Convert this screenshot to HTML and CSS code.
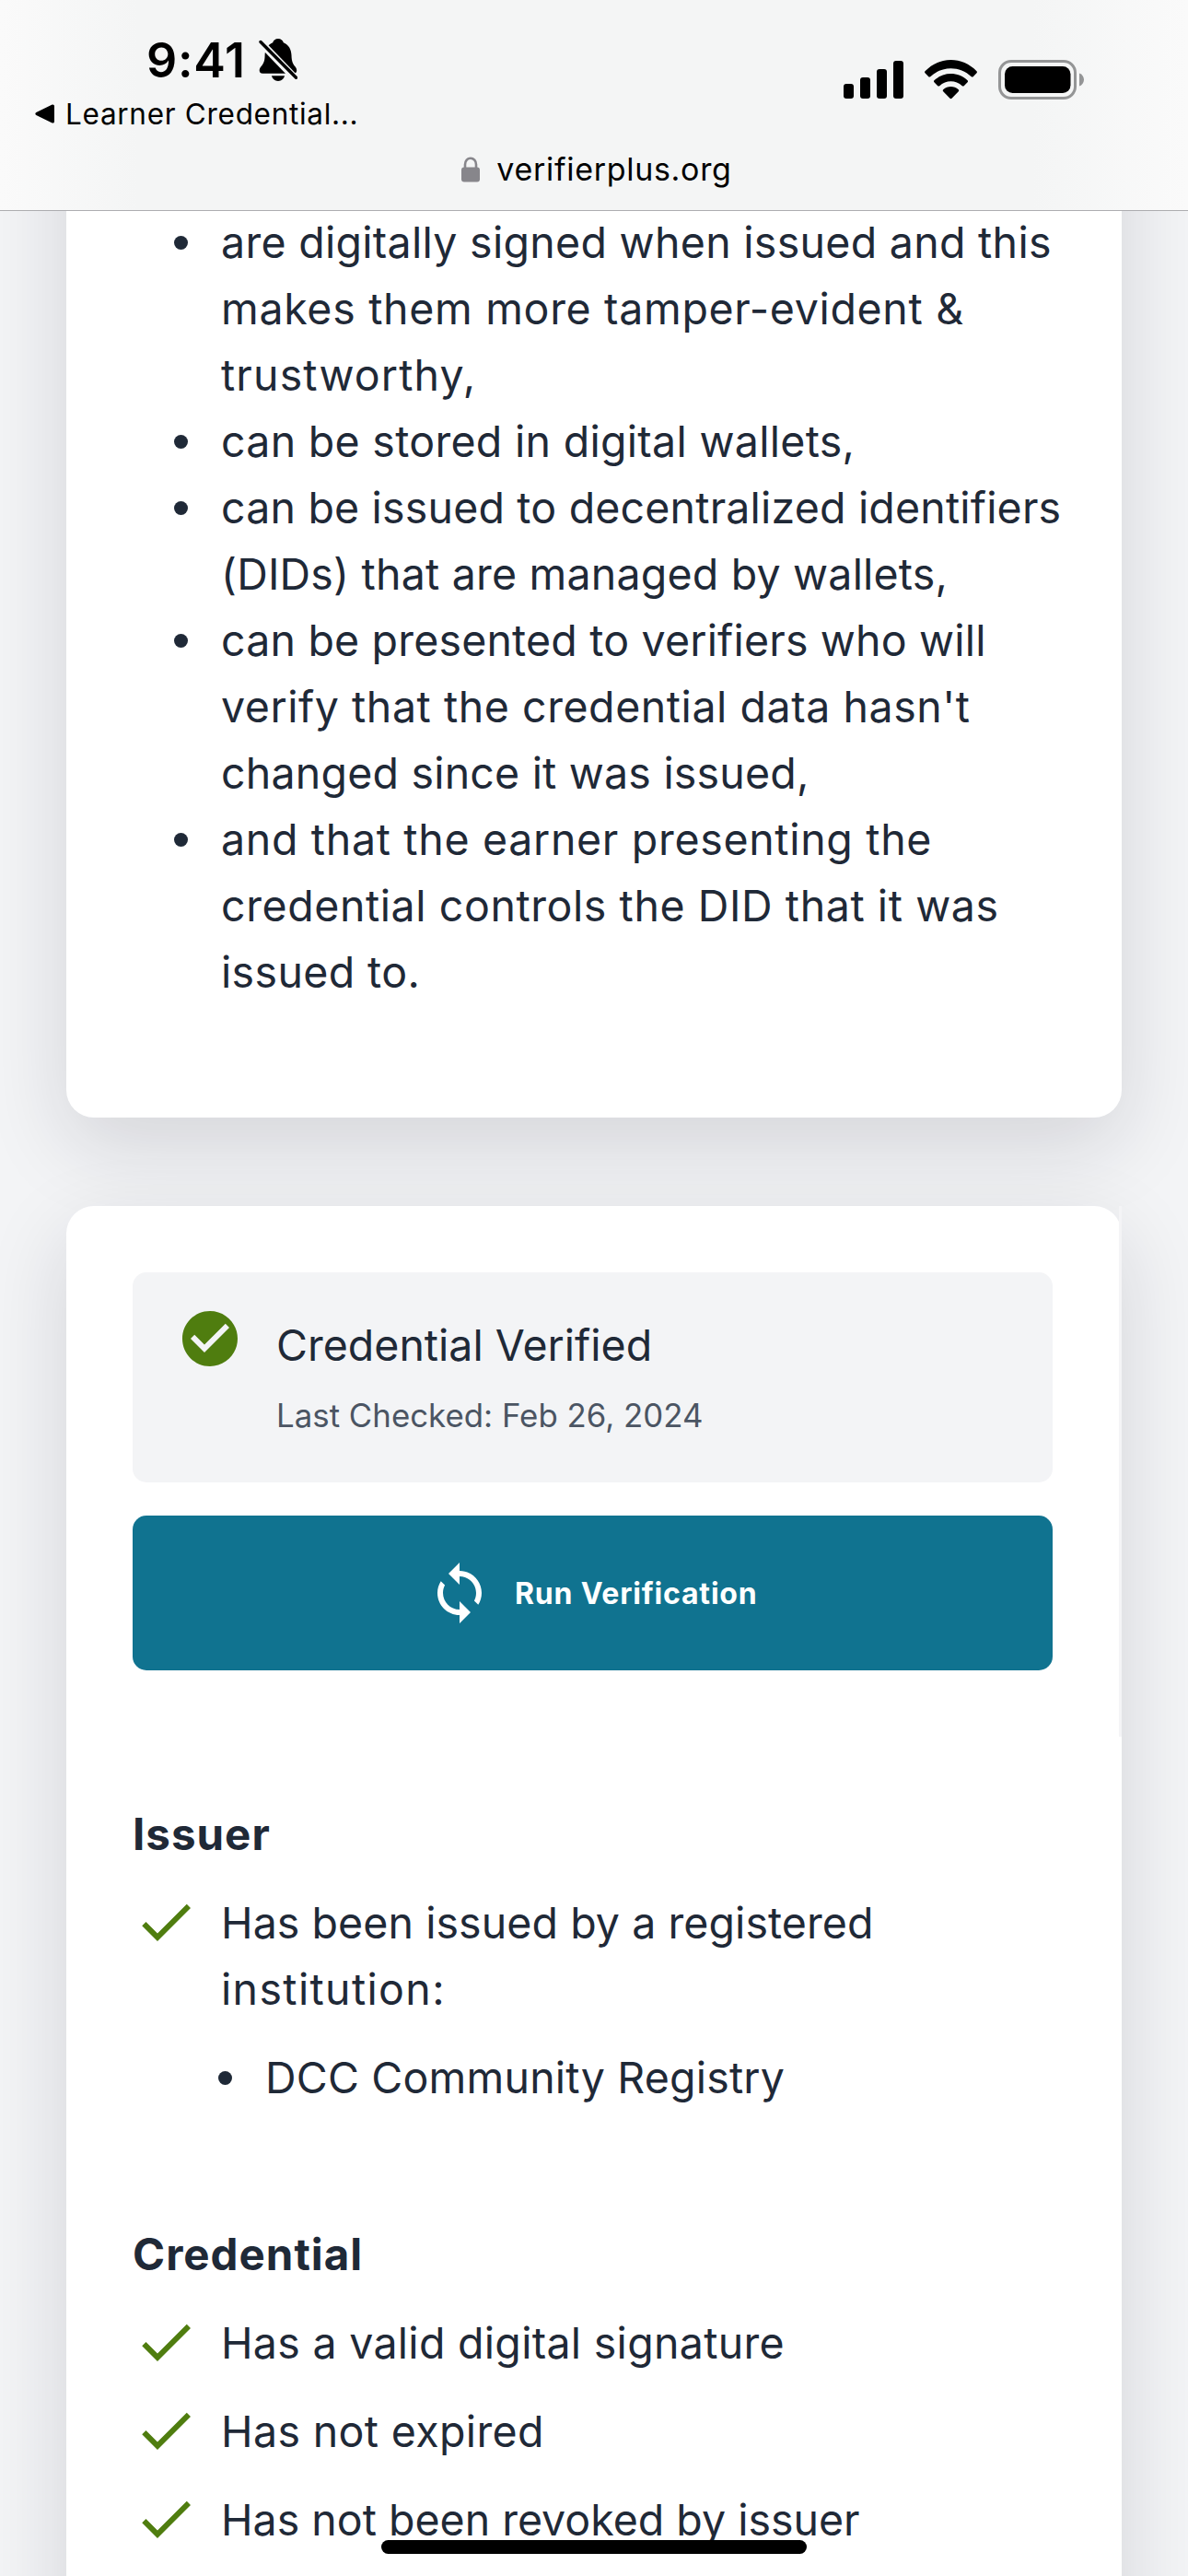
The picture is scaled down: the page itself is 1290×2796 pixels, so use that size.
FILE: index.html
```html
<!DOCTYPE html>
<html lang="en">
<head>
<meta charset="utf-8">
<title>VerifierPlus</title>
<link rel="stylesheet" href="styles.css">
</head>
<body>
<div class="screen">
  <header class="chrome">
    <div class="status">
      <div class="status-left">
        <div class="time-row">
          <span class="time">9:41</span>
          <svg class="bell" viewBox="0 0 42 46" width="42" height="46">
            <path d="M21 0c2.900 0 5.200 1.700 5.800 4.200C32.500 6.500 35.300 11.500 35.500 18c.2 6.500 1.300 9 3.800 12 1.400 1.700 1.900 3 1.900 4.500 0 2-1.300 3.300-3.600 3.300H4.300C2 37.800.7 36.500.7 34.500c0-1.500.5-2.800 1.900-4.500C5.200 27 6.500 24.500 6.600 18 6.800 11.500 9.500 6.500 15.200 4.200 15.800 1.700 18.100 0 21 0z"/>
            <path d="M14 40.300h14c-.7 3.300-3.500 5.700-7 5.700s-6.300-2.400-7-5.700z"/>
            <path class="bell-gap" d="M1 3l39.500 41" />
            <path class="bell-slash" d="M2 3.500l38.500 38.700"/>
          </svg>
        </div>
        <div class="back-row">
          <svg viewBox="0 0 21 21" width="21" height="21"><path d="M18.200.7L1.300 9C0 9.700 0 11.300 1.300 12l16.900 8.300c1.500.7 2.800 0 2.800-1.600V2.300C21 .7 19.700 0 18.200.7z"/></svg>
          <span class="back">Learner Credential...</span>
        </div>
      </div>
      <div class="status-right">
        <svg viewBox="0 0 65 43" width="65" height="43">
          <rect x="0" y="26" width="11" height="16" rx="3"/>
          <rect x="18" y="19" width="11" height="23" rx="3"/>
          <rect x="36" y="10" width="11" height="32" rx="3"/>
          <rect x="54" y="1" width="11" height="41" rx="3"/>
        </svg>
        <svg viewBox="0 0 57 43" width="57" height="43">
          <path d="M.5 12.300C16-4 41-4 56.500 12.300c.6.600.6 1.400 0 2l-3.800 3.900c-.5.500-1.300.5-1.900 0-12.500-12-32-12-44.600 0-.6.500-1.400.5-1.900 0L.5 14.300c-.6-.6-.6-1.400 0-2z"/>
          <path d="M10.400 22.300c10.200-9.700 26-9.700 36.200 0 .6.600.6 1.400 0 2l-3.900 3.900c-.5.500-1.300.5-1.900 0-7.100-6.500-17.500-6.500-24.600 0-.6.500-1.400.5-1.900 0l-3.900-3.900c-.6-.6-.6-1.400 0-2z"/>
          <path d="M20.200 32.300c4.800-4.300 11.800-4.300 16.600 0 .6.600.6 1.400 0 2l-7.300 7.400c-.6.600-1.400.6-2 0l-7.300-7.400c-.6-.6-.6-1.400 0-2z"/>
        </svg>
        <svg viewBox="0 0 94 43" width="94" height="43">
          <rect class="battery-ring" x="1.500" y="1.500" width="82" height="40" rx="12.500"/>
          <rect x="7" y="7" width="71.500" height="29" rx="8.500"/>
          <path class="battery-cap" d="M88 14.500c3 1.100 5 3.800 5 7s-2 5.900-5 7z"/>
        </svg>
      </div>
    </div>
    <div class="address">
      <svg viewBox="0 0 20 28" width="20" height="28">
        <rect x="0" y="11.500" width="20" height="16" rx="3"/>
        <path class="shackle" d="M4 13V8.500a6 6.800 0 0 1 12 0V13"/>
      </svg>
      <span class="domain">verifierplus.org</span>
    </div>
  </header>

  <main class="page">
    <section class="card card-about">
      <ul class="bullets about-list">
        <li><div><span class="ln f1">are digitally signed when issued and this</span><span class="ln f2">makes them more tamper-evident &amp;</span><span class="ln f3">trustworthy,</span></div></li>
        <li><div><span class="ln f1">can be stored in digital wallets,</span></div></li>
        <li><div><span class="ln f4">can be issued to decentralized identifiers</span><span class="ln f5">(DIDs) that are managed by wallets,</span></div></li>
        <li><div><span class="ln f4">can be presented to verifiers who will</span><span class="ln f6">verify that the credential data hasn't</span><span class="ln f5">changed since it was issued,</span></div></li>
        <li><div><span class="ln f2">and that the earner presenting the</span><span class="ln f7">credential controls the DID that it was</span><span class="ln f8">issued to.</span></div></li>
      </ul>
    </section>

    <section class="card card-verify">
      <div class="verdict">
        <svg class="verdict-icon" viewBox="0 0 24 24" width="72" height="72"><path d="M12 2C6.480 2 2 6.480 2 12s4.480 10 10 10 10-4.480 10-10S17.520 2 12 2zm-2 15l-5-5 1.410-1.410L10 14.170l7.590-7.590L19 8l-9 9z"/></svg>
        <div>
          <span class="ln f9">Credential Verified</span>
          <span class="checked">Last Checked: Feb 26, 2024</span>
        </div>
      </div>
      <button class="run" type="button">
        <svg viewBox="0 0 24 24" width="72" height="72"><path d="M12 4V1L8 5l4 4V6c3.310 0 6 2.690 6 6 0 1.010-.25 1.970-.7 2.800l1.460 1.460C19.540 15.030 20 13.570 20 12c0-4.420-3.580-8-8-8zm0 14c-3.310 0-6-2.690-6-6 0-1.010.25-1.970.7-2.800L5.240 7.740C4.460 8.970 4 10.430 4 12c0 4.420 3.580 8 8 8v3l4-4-4-4v3z"/></svg>
        <span class="run-label">Run Verification</span>
      </button>

      <h3 class="group">Issuer</h3>
      <div class="check">
        <svg viewBox="0 0 24 24" width="72" height="72"><path d="M9 16.170L4.830 12l-1.420 1.410L9 19 21 7l-1.410-1.410z"/></svg>
        <div><span class="ln f10">Has been issued by a registered</span><span class="ln f11">institution:</span></div>
      </div>
      <ul class="bullets registry-list">
        <li><div><span class="ln f5">DCC Community Registry</span></div></li>
      </ul>

      <h3 class="group group-next">Credential</h3>
      <div class="check">
        <svg viewBox="0 0 24 24" width="72" height="72"><path d="M9 16.170L4.830 12l-1.420 1.410L9 19 21 7l-1.410-1.410z"/></svg>
        <div><span class="ln f1">Has a valid digital signature</span></div>
      </div>
      <div class="check">
        <svg viewBox="0 0 24 24" width="72" height="72"><path d="M9 16.170L4.830 12l-1.420 1.410L9 19 21 7l-1.410-1.410z"/></svg>
        <div><span class="ln f8">Has not expired</span></div>
      </div>
      <div class="check">
        <svg viewBox="0 0 24 24" width="72" height="72"><path d="M9 16.170L4.830 12l-1.420 1.410L9 19 21 7l-1.410-1.410z"/></svg>
        <div><span class="ln f9">Has not been revoked by issuer</span></div>
      </div>
      <div class="edge"></div>
    </section>
  </main>
  <div class="home-indicator"></div>
</div>
</body>
</html>
```
FILE: styles.css
```css
* { box-sizing: border-box; }
body {
  margin: 0;
  font-family: Inter, "Liberation Sans", sans-serif;
  color: #1f2937;
}
svg { display: block; flex: none; }
.screen {
  position: relative;
  width: 1290px;
  height: 2796px;
  overflow: hidden;
  background: #f3f4f6;
  display: flex;
  flex-direction: column;
}

/* Status bar and address */
.chrome {
  flex: none;
  height: 229px;
  padding-top: 36px;
  border-bottom: 1px solid #adadb0;
  background: linear-gradient(90deg, #fafafa 0, #f4f5f5 150px, #f4f5f5 1120px, #fafafa 100%);
  color: #000;
}
.status { display: flex; justify-content: space-between; padding-right: 112px; }
.time-row { display: flex; padding-left: 159px; height: 60px; }
.time { width: 122px; font-size: 52px; font-weight: 600; line-height: 60px; letter-spacing: .7px; white-space: nowrap; }
.bell { margin-top: 6px; }
.bell-gap { stroke: #f4f5f5; stroke-width: 8; }
.bell-slash { stroke: #000; stroke-width: 3.400; stroke-linecap: round; }
.back-row { display: flex; gap: 12px; padding-left: 38px; margin-top: 8px; height: 40px; }
.back-row svg { margin-top: 9px; }
.back { font-size: 31.500px; line-height: 40px; letter-spacing: .7px; white-space: nowrap; }
.status-right { display: flex; gap: 23px; margin-top: 29px; }
.battery-ring { fill: none; stroke: #949596; stroke-width: 3; }
.battery-cap { fill: #949596; }
.address { display: flex; justify-content: center; gap: 18px; margin-top: 18px; height: 44px; padding-left: 6px; }
.address svg { margin-top: 8px; fill: #87868b; }
.shackle { fill: none; stroke: #87868b; stroke-width: 2.600; }
.domain { font-size: 34px; line-height: 44px; letter-spacing: .7px; }

/* Cards */
.page { flex: 1; min-height: 0; overflow: hidden; padding: 0 72px; }
.card {
  background: #fff;
  border-radius: 30px;
  box-shadow: 0 30px 90px rgba(20, 20, 43, .14);
}
.card-about { margin-top: -200px; padding: 198px 0 122px 117px; }
.card-verify { position: relative; margin-top: 96px; height: 1700px; padding: 72px 75px 0 72px; }
.edge {
  position: absolute;
  top: 0;
  right: 0;
  width: 3px;
  height: 576px;
  background: #f4f4f6;
}

/* Text lines and their tracking */
.ln { display: block; font-size: 46.500px; line-height: 72px; white-space: nowrap; }
.f1 { letter-spacing: .29px; }
.f2 { letter-spacing: .68px; }
.f3 { letter-spacing: 1.150px; }
.f4 { letter-spacing: .18px; }
.f5 { letter-spacing: .2px; }
.f6 { letter-spacing: .55px; }
.f7 { letter-spacing: .58px; }
.f8 { letter-spacing: .36px; }
.f9 { letter-spacing: 0; }
.f10 { letter-spacing: .07px; }
.f11 { letter-spacing: 1.350px; }

.bullets { list-style: none; margin: 0; padding: 0; }
.bullets li { display: flex; }
.bullets li::before {
  content: "";
  flex: none;
  width: 15px;
  height: 15px;
  margin: 29px 36px 0 0;
  border-radius: 50%;
  background: #1f2937;
}

/* Verification result */
.verdict {
  display: flex;
  gap: 36px;
  height: 228px;
  padding: 43px 48px 0;
  border-radius: 15px;
  background: #f3f4f6;
}
.verdict-icon { margin-top: -7px; fill: #4f7d0f; }
.checked {
  display: block;
  margin-top: 13px;
  font-size: 34.800px;
  line-height: 54px;
  letter-spacing: .02px;
  color: #4b5563;
  white-space: nowrap;
}
.run {
  display: flex;
  align-items: center;
  gap: 24px;
  width: 100%;
  height: 168px;
  margin-top: 36px;
  padding: 0 0 0 319px;
  border: 0;
  border-radius: 15px;
  background: #107390;
  color: #fff;
  font-family: inherit;
}
.run svg { fill: #fff; }
.run-label { font-size: 32px; font-weight: 700; letter-spacing: .8px; white-space: nowrap; }

/* Check groups */
.group {
  margin: 142px 0 0;
  font-size: 47.500px;
  font-weight: 700;
  line-height: 72px;
  letter-spacing: 1px;
}
.group-next { margin-top: 120px; }
.check { display: flex; gap: 24px; margin-top: 24px; }
.check svg { margin-top: -1px; margin-bottom: -2px; fill: #4f7d0f; }
.registry-list { margin-top: 24px; padding-left: 93px; }

.home-indicator {
  position: absolute;
  left: 414px;
  bottom: 24px;
  width: 462px;
  height: 15px;
  border-radius: 8px;
  background: #000;
}
```
